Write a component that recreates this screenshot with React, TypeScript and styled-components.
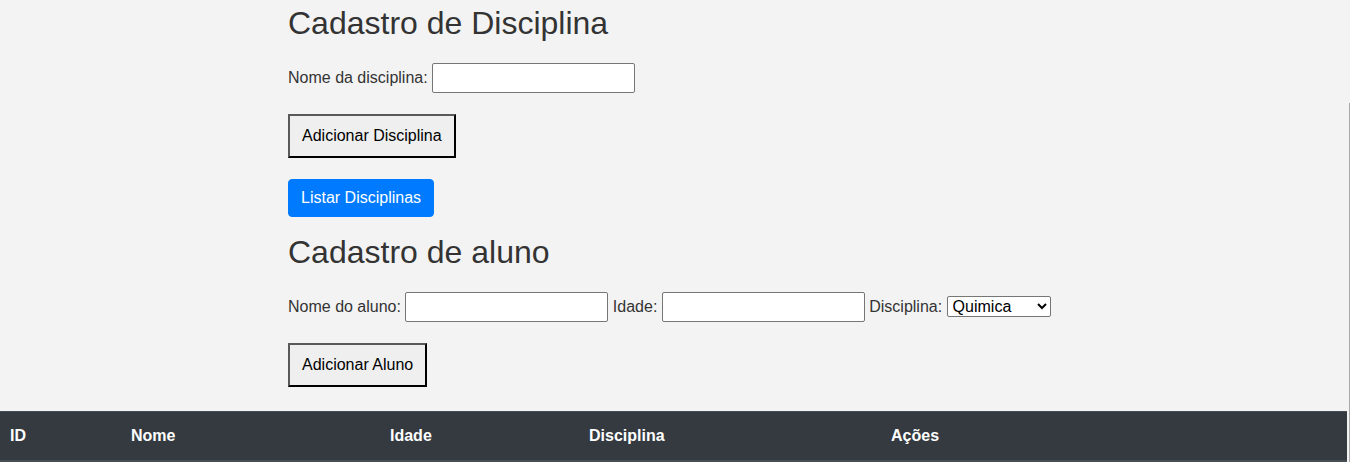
import React from "react";
import styled, { createGlobalStyle } from "styled-components";

const GlobalStyle = createGlobalStyle`
  html, body {
    margin: 0;
    padding: 0;
    background: #f3f3f3;
    font-family: "Liberation Sans", Arial, sans-serif;
    font-size: 16px;
    color: #333;
    overflow: hidden;
  }
`;

const Page = styled.div`
  min-height: 462px;
`;

const Container = styled.div`
  padding-left: 288px;
  display: flex;
  flex-direction: column;
  align-items: flex-start;
`;

const Title = styled.h2<{ $top: number }>`
  font-size: 32px;
  font-weight: 400;
  line-height: 38px;
  color: #333;
  margin: ${(p) => p.$top}px 0 0 0;
`;

const FormRow = styled.div`
  margin-top: 21px;
  height: 30px;
  line-height: 30px;
  white-space: nowrap;
  font-size: 16px;
  color: #333;
`;

const TextInput = styled.input`
  box-sizing: border-box;
  width: 203px;
  height: 30px;
  padding: 5px 4px;
  font: 16px "Liberation Sans", Arial, sans-serif;
  border: 1px solid #767676;
  border-radius: 2px;
  background: #fff;
  vertical-align: baseline;
`;

const Select = styled.select`
  box-sizing: border-box;
  width: 104px;
  height: 21px;
  font: 16px "Liberation Sans", Arial, sans-serif;
  color: #000;
  border: 1px solid #767676;
  border-radius: 2px;
  background: #fff;
  padding: 0 0 0 1px;
  vertical-align: baseline;
`;

const OutlineButton = styled.button`
  box-sizing: border-box;
  margin-top: 21px;
  height: 44px;
  padding: 0 12px;
  font: 16px "Liberation Sans", Arial, sans-serif;
  color: #000;
  background: #efefef;
  border: 2px solid;
  border-color: #595959 #000 #000 #595959;
  cursor: pointer;
`;

const PrimaryButton = styled.button`
  box-sizing: border-box;
  margin-top: 21px;
  height: 38px;
  padding: 6px 12px;
  font: 16px/24px "Liberation Sans", Arial, sans-serif;
  color: #fff;
  background: #007bff;
  border: 1px solid #007bff;
  border-radius: 4px;
  cursor: pointer;
`;

const Table = styled.table`
  margin-top: 24px;
  width: 1347px;
  border-collapse: collapse;
  table-layout: fixed;
`;

const HeadCell = styled.th<{ $w: number }>`
  box-sizing: border-box;
  width: ${(p) => p.$w}px;
  text-align: left;
  padding: 12px 10px;
  font: bold 16px/24px "Liberation Sans", Arial, sans-serif;
  color: #fff;
  background: #343a40;
  border-top: 1px solid #454d55;
  border-bottom: 2px solid #454d55;
`;

const ScrollEdge = styled.div`
  position: fixed;
  right: 0;
  top: 103px;
  bottom: 0;
  width: 1px;
  background: #a9a9a9;
`;

const columns = [
  { label: "ID", w: 121 },
  { label: "Nome", w: 259 },
  { label: "Idade", w: 199 },
  { label: "Disciplina", w: 302 },
  { label: "Ações", w: 466 },
];

export default function App() {
  return (
    <Page>
      <GlobalStyle />
      <Container>
        <Title $top={4}>Cadastro de Disciplina</Title>
        <FormRow>
          Nome da disciplina: <TextInput type="text" />
        </FormRow>
        <OutlineButton>Adicionar Disciplina</OutlineButton>
        <PrimaryButton>Listar Disciplinas</PrimaryButton>
        <Title $top={16}>Cadastro de aluno</Title>
        <FormRow>
          Nome do aluno: <TextInput type="text" /> Idade: <TextInput type="text" />{" "}
          Disciplina:{" "}
          <Select defaultValue="Quimica">
            <option>Quimica</option>
          </Select>
        </FormRow>
        <OutlineButton>Adicionar Aluno</OutlineButton>
      </Container>
      <Table>
        <thead>
          <tr>
            {columns.map((c) => (
              <HeadCell key={c.label} $w={c.w}>
                {c.label}
              </HeadCell>
            ))}
          </tr>
        </thead>
      </Table>
      <ScrollEdge />
    </Page>
  );
}
